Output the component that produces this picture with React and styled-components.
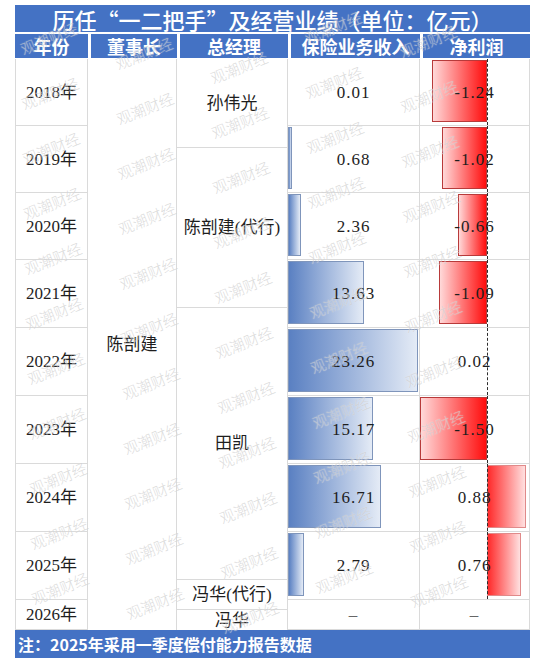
import React from "react";
import styled, { createGlobalStyle } from "styled-components";

const BLUE = "#4472c4";
const GRID = "#dadada";
const SERIF = `"Liberation Serif", "Noto Sans CJK SC", serif`;
const SANS = `"Noto Sans CJK SC", "Noto Sans", sans-serif`;
const COLS = "72px 89px 111px 132px 110px";

// px per unit for the two bar columns
const REV_SCALE = 5.59;
const PROFIT_SCALE = 44.4;
const AXIS = 67;

const GlobalStyle = createGlobalStyle`
  body {
    margin: 0;
    background: #fff;
  }
`;

const Page = styled.div`
  position: relative;
  width: 515px;
  padding: 5px 20px 3px 15px;
  overflow: hidden;
`;

const Title = styled.div`
  height: 27px;
  margin-bottom: 2px;
  background: ${BLUE};
  color: #fff;
  font-family: ${SANS};
  font-size: 22px;
  font-weight: 500;
  line-height: 1;
  display: flex;
  align-items: center;
  justify-content: center;
`;

const HeaderRow = styled.div`
  display: grid;
  grid-template-columns: 73px 89px 111px 132px 110px;
  height: 24px;
  margin-bottom: 1px;
`;

const HeaderCell = styled.div`
  background: ${BLUE};
  color: #fff;
  font-family: ${SANS};
  font-size: 18px;
  font-weight: 700;
  line-height: 1;
  display: flex;
  align-items: center;
  justify-content: center;
  & + & {
    border-left: 3px solid #fff;
  }
`;

const Body = styled.div`
  display: grid;
  grid-template-columns: ${COLS};
  grid-template-rows: 67px 67px 67px 68px 68px 68px 68px 68px 30px;
  border-left: 1px solid ${GRID};
  font-family: ${SERIF};
  font-size: 17px;
  line-height: 1;
  color: #1e1e1e;
`;

const YearCell = styled.div`
  grid-column: 1;
  border-right: 1px solid ${GRID};
  border-bottom: 1px solid ${GRID};
  display: flex;
  align-items: center;
  justify-content: center;
`;

const ChairCell = styled.div`
  grid-column: 2;
  grid-row: 1 / -1;
  border-right: 1px solid ${GRID};
  display: flex;
  align-items: center;
  justify-content: center;
`;

const ManagerColumn = styled.div`
  grid-column: 3;
  grid-row: 1 / -1;
  border-right: 1px solid ${GRID};
  display: flex;
  flex-direction: column;
`;

const ManagerCell = styled.div`
  height: ${(p) => p.$h}px;
  flex: none;
  display: flex;
  align-items: center;
  justify-content: center;
  border-bottom: 1px solid ${GRID};
  &:last-child {
    border-bottom: none;
    flex: 1;
  }
`;

const BarCell = styled.div`
  grid-column: ${(p) => p.$col};
  display: grid;
  border-right: 1px solid ${GRID};
  border-bottom: 1px solid ${GRID};
  & > * {
    grid-area: 1 / 1;
  }
`;

const RevBar = styled.div`
  justify-self: start;
  align-self: stretch;
  margin: 1px 0 3px;
  box-sizing: border-box;
  background: linear-gradient(to right, #5a80c2, #e4ebf6);
  border: 1px solid #7f95bb;
`;

const ProfitBar = styled.div`
  justify-self: start;
  align-self: stretch;
  margin-top: 1px;
  margin-bottom: 3px;
  box-sizing: border-box;
  background: ${(p) =>
    p.$neg
      ? "linear-gradient(to right, #ffd9d9, #ff0d0d)"
      : "linear-gradient(to right, #ff2a2a, #ffe0e0)"};
  border: 1px solid ${(p) => (p.$neg ? "#b83a3a" : "#e08a8a")};
`;

const Axis = styled.div`
  justify-self: start;
  align-self: stretch;
  margin-left: ${AXIS}px;
  width: 0;
  border-left: 1px dashed #2e2e2e;
`;

const Value = styled.span`
  place-self: center;
  letter-spacing: 1px;
  z-index: 1;
  color: ${(p) => (p.$dim ? "#666" : "#1e1e1e")};
`;

const Footer = styled.div`
  height: 28px;
  background: ${BLUE};
  color: #fff;
  font-family: ${SANS};
  font-size: 16px;
  font-weight: 700;
  line-height: 1;
  display: flex;
  align-items: center;
  padding-left: 3px;
`;

const Mark = styled.span`
  position: absolute;
  transform: translate(-50%, -50%) rotate(-22deg);
  font-family: ${SANS};
  font-size: 15px;
  font-weight: 300;
  line-height: 1;
  white-space: nowrap;
  color: rgba(185, 185, 185, 0.5);
  text-shadow: 0 0 1px rgba(255, 255, 255, 0.6);
  pointer-events: none;
  z-index: 5;
`;

const rows = [
  { year: "2018年", rev: 0.01, profit: -1.24 },
  { year: "2019年", rev: 0.68, profit: -1.02 },
  { year: "2020年", rev: 2.36, profit: -0.66 },
  { year: "2021年", rev: 13.63, profit: -1.09 },
  { year: "2022年", rev: 23.26, profit: 0.02 },
  { year: "2023年", rev: 15.17, profit: -1.5 },
  { year: "2024年", rev: 16.71, profit: 0.88 },
  { year: "2025年", rev: 2.79, profit: 0.76 },
  { year: "2026年", rev: null, profit: null },
];

const managers = [
  { name: "孙伟光", h: 88 },
  { name: "陈剖建(代行)", h: 159 },
  { name: "田凯", h: 271 },
  { name: "冯华(代行)", h: 29 },
  { name: "冯华", h: 25 },
];

// watermark lattice, kept to the ones that sit fully inside the table
const marks = [];
for (let i = 0; i < 6; i++) {
  for (let j = -2; j < 12; j++) {
    const x = 50 + 95 * i + 1.1 * j;
    const y = 93 + 14.5 * i + 55 * j;
    if (x > 36 && x < 512 && y > 18 && y < 622) marks.push({ x, y });
  }
}

const RevenueCell = ({ value }) => (
  <BarCell $col={4}>
    {value != null && value * REV_SCALE >= 1 && (
      <RevBar style={{ width: value * REV_SCALE }} />
    )}
    {value == null ? <Value $dim>–</Value> : <Value>{value.toFixed(2)}</Value>}
  </BarCell>
);

const ProfitCell = ({ value }) => {
  if (value == null) {
    return (
      <BarCell $col={5}>
        <Value $dim>–</Value>
      </BarCell>
    );
  }
  const w = Math.abs(value) * PROFIT_SCALE;
  const neg = value < 0;
  return (
    <BarCell $col={5}>
      {w >= 2 && (
        <ProfitBar
          $neg={neg}
          style={{ width: w, marginLeft: neg ? AXIS - w : AXIS }}
        />
      )}
      <Axis />
      <Value>{value.toFixed(2)}</Value>
    </BarCell>
  );
};

export default function App() {
  return (
    <Page>
      <GlobalStyle />
      <Title>历任“一二把手”及经营业绩（单位：亿元）</Title>
      <HeaderRow>
        <HeaderCell>年份</HeaderCell>
        <HeaderCell>董事长</HeaderCell>
        <HeaderCell>总经理</HeaderCell>
        <HeaderCell>保险业务收入</HeaderCell>
        <HeaderCell>净利润</HeaderCell>
      </HeaderRow>
      <Body>
        <ChairCell>陈剖建</ChairCell>
        <ManagerColumn>
          {managers.map((m) => (
            <ManagerCell key={m.name} $h={m.h}>
              {m.name}
            </ManagerCell>
          ))}
        </ManagerColumn>
        {rows.map((r, i) => (
          <React.Fragment key={r.year}>
            <YearCell style={{ gridRow: i + 1 }}>{r.year}</YearCell>
            <RevenueCell value={r.rev} />
            <ProfitCell value={r.profit} />
          </React.Fragment>
        ))}
      </Body>
      <Footer>注：2025年采用一季度偿付能力报告数据</Footer>
      {marks.map((m, k) => (
        <Mark key={k} style={{ left: m.x, top: m.y }}>
          观潮财经
        </Mark>
      ))}
    </Page>
  );
}
